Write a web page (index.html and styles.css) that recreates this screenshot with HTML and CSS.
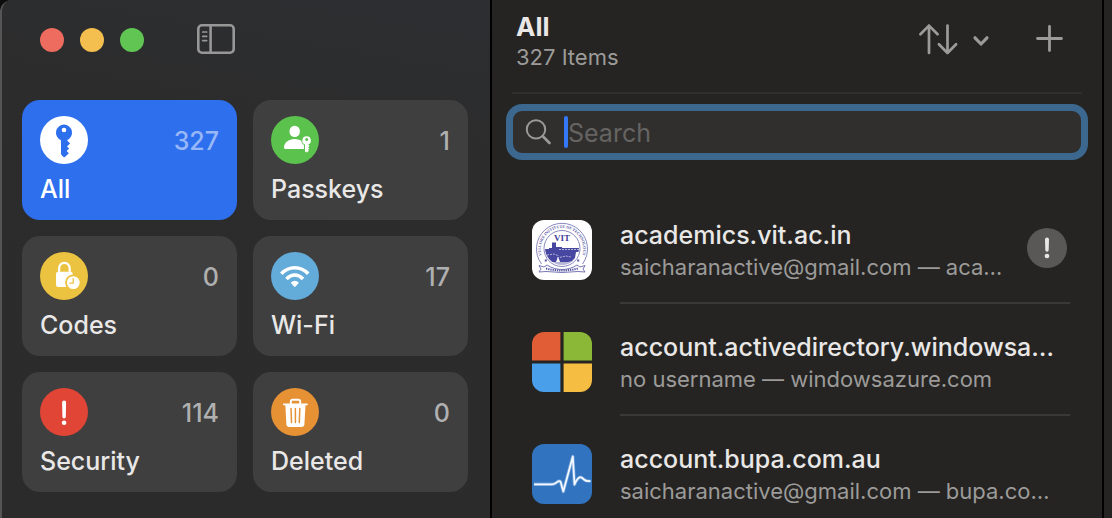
FILE: index.html
```html
<!DOCTYPE html>
<html lang="en">
<head>
<meta charset="utf-8">
<title>Passwords</title>
<link rel="stylesheet" href="styles.css">
</head>
<body>
<div class="window">
  <aside class="sidebar">
    <div class="titlebar">
      <div class="lights">
        <button class="light light-close" aria-label="Close"></button>
        <button class="light light-minimize" aria-label="Minimize"></button>
        <button class="light light-zoom" aria-label="Zoom"></button>
      </div>
      <button class="icon-button" aria-label="Toggle sidebar">
        <svg width="40" height="32" viewBox="0 0 40 32" fill="none" stroke="#979798" stroke-width="2.6" stroke-linecap="round">
          <rect x="2.3" y="1.3" width="35.4" height="27.4" rx="3.6"/>
          <path d="M14.600 1.500v27"/>
          <path d="M6.700 8h4M6.700 12.300h4M6.700 16.600h4" stroke-width="1.7"/>
        </svg>
      </button>
    </div>
    <nav class="cards">
      <button class="card card-selected">
        <svg class="badge" viewBox="0 0 48 48">
          <circle cx="24" cy="24" r="24" fill="#fff"/>
          <path fill="#2e6fee" fill-rule="evenodd" d="M24 8.6a8.1 8.1 0 0 1 3 15.6l3.1 3.3-3.1 2.9 2.1 2.2-2.5 2.3 2.3 2.3-4 3.700q-.9.600-1.800-.2L21 38.200V24.200A8.100 8.100 0 0 1 24 8.600zm0 3.100a2.300 2.300 0 1 0 0 4.600 2.300 2.300 0 0 0 0-4.600z"/>
        </svg>
        <span class="count">327</span>
        <span class="label">All</span>
      </button>
      <button class="card">
        <svg class="badge" viewBox="0 0 48 48">
          <circle cx="24" cy="24" r="24" fill="#5bc24d"/>
          <ellipse cx="23.700" cy="15.400" rx="5.200" ry="5.700" fill="#fff"/>
          <path fill="#fff" d="M13 31.500c0-4.500 4.500-8.400 10.700-8.400 3 0 5.600.9 7.400 2.300.3 1.600 1 2.600 2.100 3.400V33H14.500q-1.500 0-1.500-1.500z"/>
          <path fill="#fff" stroke="#5bc24d" stroke-width="1.600" paint-order="stroke" d="M35.600 20.200a4.300 4.300 0 0 1 1.600 8.300l1.400 1.500-1.500 1.400 1.200 1.200-1.200 1.200.8 1-1.800 1.400h-1.200l-.9-1v-6.700A4.300 4.300 0 0 1 35.600 20.200z"/>
          <circle cx="35.700" cy="23.500" r="1.500" fill="#5bc24d"/>
        </svg>
        <span class="count">1</span>
        <span class="label">Passkeys</span>
      </button>
      <button class="card">
        <svg class="badge" viewBox="0 0 48 48">
          <circle cx="24" cy="24" r="24" fill="#ecc341"/>
          <path d="M19.100 21v-4.300c0-3.500 2.200-5.800 5.300-5.800s5.300 2.300 5.300 5.800V21" fill="none" stroke="#fff" stroke-width="2.200"/>
          <rect x="16" y="19.800" width="16.700" height="15.200" rx="2.200" fill="#fff"/>
          <circle cx="33.300" cy="30.600" r="7.300" fill="#fff" stroke="#ecc341" stroke-width="1.800"/>
          <path d="M33.200 26.600v4.500h-3.400" fill="none" stroke="#ecc341" stroke-width="1.300" stroke-linecap="round" stroke-linejoin="round"/>
        </svg>
        <span class="count">0</span>
        <span class="label">Codes</span>
      </button>
      <button class="card">
        <svg class="badge" viewBox="0 0 48 48">
          <circle cx="24" cy="24" r="24" fill="#63abd9"/>
          <g fill="none" stroke="#fff" stroke-width="3.500">
            <path d="M10.300 21.800C18 13.800 29.500 13.800 37.200 21.800"/>
            <path d="M15.500 27C20.500 21.700 27 21.700 32 27"/>
          </g>
          <path fill="#fff" d="M19.700 30.700q4.100-3.700 8.200 0l-3.300 3.700q-.8.800-1.600 0z"/>
        </svg>
        <span class="count">17</span>
        <span class="label">Wi-Fi</span>
      </button>
      <button class="card">
        <svg class="badge" viewBox="0 0 48 48">
          <circle cx="24" cy="24" r="24" fill="#e14536"/>
          <path fill="#fff" d="M22.100 14.600a2 2 0 0 1 4 0l-.3 14.200a1.700 1.700 0 0 1-3.400 0z"/>
          <circle cx="24.100" cy="34.700" r="2.300" fill="#fff"/>
        </svg>
        <span class="count">114</span>
        <span class="label">Security</span>
      </button>
      <button class="card">
        <svg class="badge" viewBox="0 0 48 48">
          <circle cx="24" cy="24" r="24" fill="#e79135"/>
          <path d="M19.800 16v-2.400q0-1.900 1.900-1.900H27.300q1.900 0 1.900 1.900V16M12.900 16.400H35.900" fill="none" stroke="#fff" stroke-width="1.900" stroke-linecap="round"/>
          <path fill="#fff" d="M14.300 16.500H34.500L33.400 36.300q-.2 2.700-2.900 2.700H18.300q-2.700 0-2.900-2.700z"/>
          <path d="M20 20.500l.5 14M24.400 20.500v14M28.800 20.500l-.5 14" fill="none" stroke="#e79135" stroke-width="1.500" stroke-linecap="round"/>
        </svg>
        <span class="count">0</span>
        <span class="label">Deleted</span>
      </button>
    </nav>
  </aside>

  <main class="list-pane">
    <header class="list-header">
      <div class="heading">
        <h1>All</h1>
        <p>327 Items</p>
      </div>
      <div class="actions">
        <button class="icon-button" aria-label="Sort">
          <svg width="72" height="32" viewBox="0 0 72 32" fill="none" stroke="#9c9b99" stroke-linecap="round" stroke-linejoin="round" stroke-width="2.700">
            <path d="M11 30V2.600M2.400 11.300L11 2.600l8.600 8.700"/>
            <path d="M29.500 2.600V30M20.900 21.300l8.600 8.700 8.600-8.700"/>
            <path d="M57 14.800l6 6.200 6-6.200" stroke-width="3.200"/>
          </svg>
        </button>
        <button class="icon-button" aria-label="Add">
          <svg width="28" height="28" viewBox="0 0 28 28" fill="none" stroke="#9c9b99" stroke-linecap="round" stroke-width="2.800">
            <path d="M13.500 1.500v24M1.500 13.500h24"/>
          </svg>
        </button>
      </div>
    </header>

    <label class="search">
      <svg width="28" height="28" viewBox="0 0 28 28" fill="none" stroke="#9a9998" stroke-linecap="round">
        <circle cx="11" cy="11.400" r="9.200" stroke-width="2"/>
        <path d="M17.800 18.300l6.700 6.700" stroke-width="2.700"/>
      </svg>
      <span class="caret"></span>
      <input type="text" placeholder="Search" aria-label="Search">
    </label>

    <ul class="items">
      <li class="item">
        <svg class="site-icon" viewBox="0 0 60 60">
          <defs>
            <path id="seal-ring" d="M14.500 43.500A21.200 21.200 0 1 1 45.500 43.500"/>
            <clipPath id="seal-clip"><circle cx="30" cy="28" r="17"/></clipPath>
          </defs>
          <rect width="60" height="60" fill="#fff"/>
          <g fill="none" stroke="#5655a2" stroke-width=".7">
            <path d="M9.500 44A25.500 25.500 0 1 1 50.500 44"/>
            <circle cx="30" cy="28.500" r="18"/>
          </g>
          <text class="seal-text"><textPath href="#seal-ring" startOffset="50%" text-anchor="middle">VELLORE INSTITUTE OF TECHNOLOGY</textPath></text>
          <g clip-path="url(#seal-clip)">
            <path fill="#4746a0" d="M12 29h5v-1h3v-5l1-1 1 1 1-1 1 1v4h6v1h18v4H44l-1 6-3 3-4 1H12z"/>
            <path fill="none" stroke="#4746a0" d="M14 42h31M18 44h24" stroke-width=".8"/>
            <path fill="none" stroke="#fff" d="M15 35l7-1 5 2M25 38l9-2 5 1M27 29.500h20" stroke-width=".6" stroke-dasharray="2 1"/>
            <path fill="#fff" d="M24 42l2-5 1 2 1 3z"/>
          </g>
          <text class="seal-name" x="30" y="20.500" text-anchor="middle">VIT</text>
          <path d="M7 45.500l5 1.500 3-2c9 6 21 6 30 0l3 2 5-1.500-2 3.500 2 3-7-.5q-16 2-32 0l-7 .5 2-3z" fill="#fff" stroke="#5655a2" stroke-width=".8"/>
          <path d="M14 48.500q16 4 32 0" fill="none" stroke="#5655a2" stroke-width="2" stroke-dasharray="1.300 .9"/>
          <path d="M13.800 39.500v2M46.200 39.500v2" stroke="#5655a2" stroke-width="2"/>
        </svg>
        <div class="item-body">
          <div class="item-text">
            <h2>academics.vit.ac.in</h2>
            <p>saicharanactive@gmail.com — aca…</p>
          </div>
          <svg class="warning" viewBox="0 0 40 40" role="img" aria-label="Security warning">
            <circle cx="20" cy="20" r="20" fill="#595857"/>
            <path fill="#e8e7e5" d="M18 11.500a2 2 0 0 1 4 0l-.3 10.600a1.700 1.700 0 0 1-3.400 0z"/>
            <circle cx="20" cy="28" r="2.300" fill="#e8e7e5"/>
          </svg>
        </div>
      </li>
      <li class="item">
        <svg class="site-icon" viewBox="0 0 60 60">
          <path fill="#e05d35" d="M0 0h28.400v28.400H0z"/>
          <path fill="#8cb837" d="M31.600 0H60v28.400H31.600z"/>
          <path fill="#4a9fea" d="M0 31.600h28.400V60H0z"/>
          <path fill="#f5bd41" d="M31.600 31.600H60V60H31.600z"/>
        </svg>
        <div class="item-body">
          <div class="item-text">
            <h2>account.activedirectory.windowsa…</h2>
            <p>no username — windowsazure.com</p>
          </div>
        </div>
      </li>
      <li class="item">
        <svg class="site-icon" viewBox="0 0 60 60">
          <rect width="60" height="60" fill="#3173bf"/>
          <path d="M2 40.300H20.500Q23 40 25 38.200T28.500 37.500L31.300 47.500L40.800 12.500L42.500 40.500Q45.500 33.500 48.500 33.200Q50 33.500 52 35.500T58.500 37" fill="none" stroke="#8db8e4" stroke-width="3.400" stroke-linejoin="round" stroke-opacity=".6"/>
          <path d="M2 40.300H20.500Q23 40 25 38.200T28.500 37.500L31.300 47.500L40.800 12.500L42.500 40.500Q45.500 33.500 48.500 33.200Q50 33.500 52 35.500T58.500 37" fill="none" stroke="#f4f9ff" stroke-width="1.800" stroke-linejoin="round"/>
        </svg>
        <div class="item-body">
          <div class="item-text">
            <h2>account.bupa.com.au</h2>
            <p>saicharanactive@gmail.com — bupa.co…</p>
          </div>
        </div>
      </li>
    </ul>
  </main>
  <section class="detail-pane" aria-label="Details"></section>
</div>
</body>
</html>
```

FILE: styles.css
```css
* {
  box-sizing: border-box;
}

body {
  margin: 0;
  background: #0d0d0d;
  font-family: Inter, "Liberation Sans", sans-serif;
  color: #e9e8e7;
}

h1,
h2,
p,
ul {
  margin: 0;
  padding: 0;
}

button {
  border: 0;
  padding: 0;
  background: none;
  color: inherit;
  font: inherit;
}

svg {
  display: block;
}

.window {
  display: flex;
  height: 100vh;
  overflow: hidden;
  border-left: 2px solid #555;
  border-top-left-radius: 12px;
  background: #252422;
}

.sidebar {
  flex: 0 0 490px;
  padding: 20px 22px 0 20px;
  border-right: 2px solid #000;
  background: linear-gradient(190deg, #2d2e31 0, #2c2c2c 30%, #2b2b2b 100%);
}

.titlebar {
  display: flex;
  align-items: center;
  gap: 52px;
  height: 40px;
  padding-left: 18px;
}

.lights {
  display: flex;
  gap: 16px;
}

.light {
  width: 24px;
  height: 24px;
  border-radius: 50%;
}

.light-close {
  background: #ed6b5f;
}

.light-minimize {
  background: #f5bf4f;
}

.light-zoom {
  background: #61c554;
}

.cards {
  display: grid;
  grid-template-columns: 1fr 1fr;
  gap: 16px;
  margin-top: 40px;
}

.card {
  display: grid;
  grid-template-columns: auto 1fr;
  align-items: center;
  row-gap: 10px;
  padding: 16px 18px;
  border-radius: 18px;
  background: #3f3f3f;
  text-align: left;
  font-size: 25px;
  font-weight: 500;
  line-height: 30px;
}

.card-selected {
  background: #2e6fee;
  color: #fff;
}

.badge {
  width: 48px;
  height: 48px;
}

.count {
  padding-top: 2px;
  text-align: right;
  color: #b0b0b0;
}

.card-selected .count {
  color: #98b7f6;
}

.label {
  grid-column: 1 / -1;
}

.list-pane {
  flex: 1;
  min-width: 0;
  padding: 12px 14px 0;
}

.list-header {
  display: flex;
  justify-content: space-between;
  margin: 0 6px 10px;
  padding: 0 18px 20px 4px;
  border-bottom: 2px solid #31302f;
}

.heading h1 {
  font-size: 26px;
  font-weight: 700;
  line-height: 30px;
}

.heading p {
  color: #9c9b99;
  font-size: 22px;
  line-height: 30px;
}

.actions {
  display: flex;
  align-items: center;
  gap: 46px;
  height: 54px;
}

.search {
  display: flex;
  align-items: center;
  height: 56px;
  padding: 0 12px;
  border: 7px solid #3c678f;
  border-radius: 16px;
  background: #302f2e;
}

.caret {
  width: 4px;
  height: 32px;
  margin-left: 11px;
  border-radius: 2px;
  background: #3478f6;
}

.search input {
  flex: 1;
  min-width: 0;
  padding: 2px 0 0;
  border: 0;
  outline: 0;
  background: none;
  color: inherit;
  font: inherit;
  font-size: 25px;
}

.search input::placeholder {
  color: #656462;
  opacity: 1;
}

.items {
  margin-top: 32px;
  padding: 0 18px 0 26px;
  list-style: none;
}

.item {
  display: flex;
  align-items: center;
  gap: 28px;
}

.site-icon {
  flex: none;
  width: 60px;
  height: 60px;
  margin-top: 4px;
  border-radius: 12px;
}

.item-body {
  display: flex;
  flex: 1;
  align-items: center;
  gap: 16px;
  min-width: 0;
  height: 112px;
  padding: 8px 3px 0 0;
  border-bottom: 2px solid #3a3938;
}

.item:last-child .item-body {
  border-color: transparent;
}

.item-text {
  flex: 1;
  min-width: 0;
  white-space: nowrap;
}

.item-text h2 {
  overflow: hidden;
  font-size: 25px;
  font-weight: 500;
  line-height: 32px;
}

.item-text p {
  overflow: hidden;
  color: #9c9b99;
  font-size: 22px;
  line-height: 32px;
}

.warning {
  flex: none;
  width: 40px;
  height: 40px;
  margin-bottom: 6px;
}

.seal-text {
  fill: #5655a2;
  font: 700 4px "Liberation Serif", serif;
}

.seal-name {
  fill: #3f3e98;
  font: 700 9px "Liberation Serif", serif;
}

.detail-pane {
  flex: 0 0 10px;
  border-left: 2px solid #000;
}
```
